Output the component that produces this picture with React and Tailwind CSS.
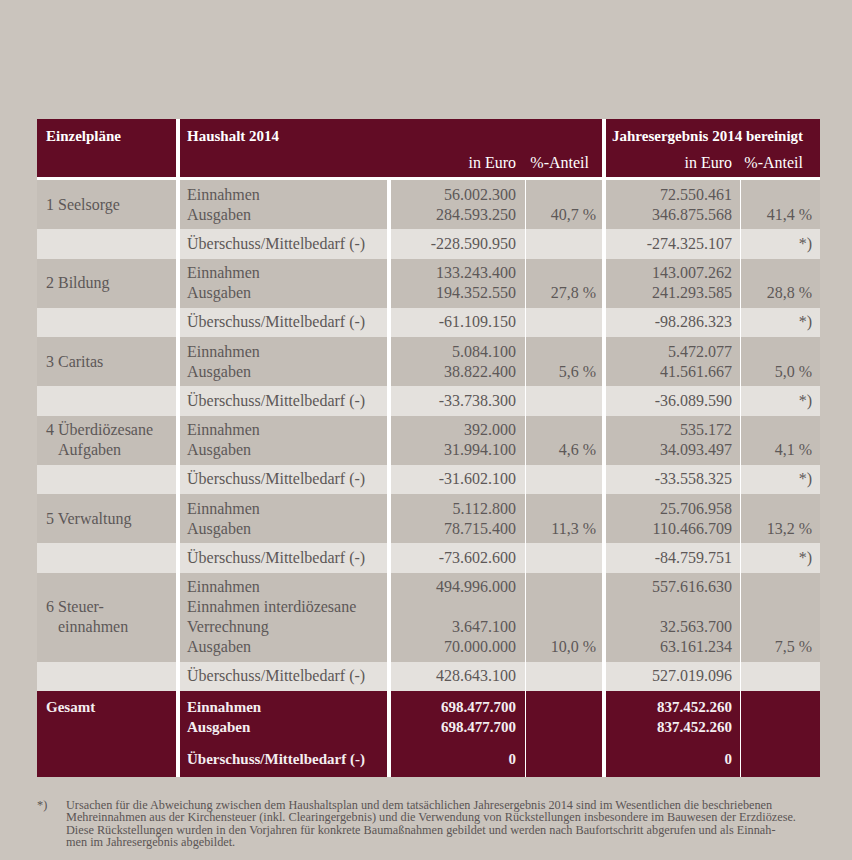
import React from 'react';

const rows = [
  {
    name: ['1 Seelsorge'],
    labels: ['Einnahmen', 'Ausgaben'],
    values: ['56.002.300', '284.593.250'],
    pct: '40,7 %',
    values2: ['72.550.461', '346.875.568'],
    pct2: '41,4 %',
    diff: '-228.590.950',
    diff2: '-274.325.107',
    star: true,
  },
  {
    name: ['2 Bildung'],
    labels: ['Einnahmen', 'Ausgaben'],
    values: ['133.243.400', '194.352.550'],
    pct: '27,8 %',
    values2: ['143.007.262', '241.293.585'],
    pct2: '28,8 %',
    diff: '-61.109.150',
    diff2: '-98.286.323',
    star: true,
  },
  {
    name: ['3 Caritas'],
    labels: ['Einnahmen', 'Ausgaben'],
    values: ['5.084.100', '38.822.400'],
    pct: '5,6 %',
    values2: ['5.472.077', '41.561.667'],
    pct2: '5,0 %',
    diff: '-33.738.300',
    diff2: '-36.089.590',
    star: true,
  },
  {
    name: ['4 Überdiözesane', 'Aufgaben'],
    labels: ['Einnahmen', 'Ausgaben'],
    values: ['392.000', '31.994.100'],
    pct: '4,6 %',
    values2: ['535.172', '34.093.497'],
    pct2: '4,1 %',
    diff: '-31.602.100',
    diff2: '-33.558.325',
    star: true,
  },
  {
    name: ['5 Verwaltung'],
    labels: ['Einnahmen', 'Ausgaben'],
    values: ['5.112.800', '78.715.400'],
    pct: '11,3 %',
    values2: ['25.706.958', '110.466.709'],
    pct2: '13,2 %',
    diff: '-73.602.600',
    diff2: '-84.759.751',
    star: true,
  },
  {
    name: ['6 Steuer-', 'einnahmen'],
    labels: ['Einnahmen', 'Einnahmen interdiözesane', 'Verrechnung', 'Ausgaben'],
    values: ['494.996.000', '', '3.647.100', '70.000.000'],
    pct: '10,0 %',
    values2: ['557.616.630', '', '32.563.700', '63.161.234'],
    pct2: '7,5 %',
    diff: '428.643.100',
    diff2: '527.019.096',
    star: false,
  },
];

const Lines = ({ items }) => (
  <>
    {items.map((t, i) => (
      <div key={i} className="h-5 whitespace-nowrap">
        {t}
      </div>
    ))}
  </>
);

const DataRow = ({ r }) => (
  <div className="flex bg-white">
    <div className="w-[139px] bg-[#c4beb7] pl-[9px] flex flex-col justify-center">
      {r.name.map((t, i) => (
        <div key={i} className={i > 0 ? 'h-5 pl-3' : 'h-5'}>
          {t}
        </div>
      ))}
    </div>
    <div className="w-[207px] ml-1 bg-[#c4beb7] pl-[7px] py-[4.5px]">
      <Lines items={r.labels} />
    </div>
    <div className="w-[134px] ml-1 bg-[#c4beb7] pr-[9px] py-[4.5px] text-right">
      <Lines items={r.values} />
    </div>
    <div className="w-[76px] ml-px bg-[#c4beb7] pr-[6px] py-[4.5px] text-right flex flex-col justify-end">
      <div className="h-5">{r.pct}</div>
    </div>
    <div className="w-[134px] ml-1 bg-[#c4beb7] pr-[8px] py-[4.5px] text-right">
      <Lines items={r.values2} />
    </div>
    <div className="w-[79px] ml-px bg-[#c4beb7] pr-[8px] py-[4.5px] text-right flex flex-col justify-end">
      <div className="h-5">{r.pct2}</div>
    </div>
  </div>
);

const DiffRow = ({ r }) => (
  <div className="flex bg-white">
    <div className="w-[139px] bg-[#e4e1dd]" />
    <div className="w-[207px] ml-1 bg-[#e4e1dd] pl-[7px] py-[4.75px]">
      <div className="h-5">Überschuss/Mittelbedarf (-)</div>
    </div>
    <div className="w-[134px] ml-1 bg-[#e4e1dd] pr-[9px] py-[4.75px] text-right">
      <div className="h-5">{r.diff}</div>
    </div>
    <div className="w-[76px] ml-px bg-[#e4e1dd]" />
    <div className="w-[134px] ml-1 bg-[#e4e1dd] pr-[8px] py-[4.75px] text-right">
      <div className="h-5">{r.diff2}</div>
    </div>
    <div className="w-[79px] ml-px bg-[#e4e1dd] pr-[8px] py-[4.75px] text-right">
      <div className="h-5">{r.star ? '*)' : ''}</div>
    </div>
  </div>
);

export default function App() {
  return (
    <div
      className="min-h-[860px] bg-[#cac4bd] pt-[119px] pl-[37px] text-[#5d5857] text-[16px] leading-5"
      style={{ fontFamily: '"Liberation Serif", "Times New Roman", serif' }}
    >
      <div className="w-[783px]">
        {/* header */}
        <div className="flex bg-white pb-[3px] text-white font-bold text-[15px]">
          <div className="w-[139px] h-[58px] bg-[#620c25] pl-[9px] pt-[7px]">Einzelpläne</div>
          <div className="w-[422px] ml-1 bg-[#620c25] pt-[7px] pb-1 flex flex-col justify-between">
            <div className="pl-[7px] h-5">Haushalt 2014</div>
            <div className="flex font-normal text-[16px]">
              <div className="w-[345px] pr-[9px] text-right h-5">in Euro</div>
              <div className="w-[77px] pr-[13px] text-right h-5">%-Anteil</div>
            </div>
          </div>
          <div className="w-[214px] ml-1 bg-[#620c25] pt-[7px] pb-1 flex flex-col justify-between">
            <div className="pl-[6px] h-5 whitespace-nowrap">Jahresergebnis 2014 bereinigt</div>
            <div className="flex font-normal text-[16px]">
              <div className="w-[134px] pr-[8px] text-right h-5">in Euro</div>
              <div className="w-[80px] pr-[17px] text-right h-5">%-Anteil</div>
            </div>
          </div>
        </div>

        {rows.map((r, i) => (
          <React.Fragment key={i}>
            <DataRow r={r} />
            <DiffRow r={r} />
          </React.Fragment>
        ))}

        {/* total */}
        <div className="flex bg-white text-[#f4eef0] font-bold text-[15px]">
          <div className="w-[139px] bg-[#620c25] pl-[9px] pt-[6px] pb-2">Gesamt</div>
          <div className="w-[207px] ml-1 bg-[#620c25] pl-[7px] pt-[6px] pb-2">
            <div className="h-5">Einnahmen</div>
            <div className="h-5">Ausgaben</div>
            <div className="h-5 mt-3">Überschuss/Mittelbedarf (-)</div>
          </div>
          <div className="w-[134px] ml-1 bg-[#620c25] pr-[9px] pt-[6px] pb-2 text-right">
            <div className="h-5">698.477.700</div>
            <div className="h-5">698.477.700</div>
            <div className="h-5 mt-3">0</div>
          </div>
          <div className="w-[76px] ml-px bg-[#620c25]" />
          <div className="w-[134px] ml-1 bg-[#620c25] pr-[8px] pt-[6px] pb-2 text-right">
            <div className="h-5">837.452.260</div>
            <div className="h-5">837.452.260</div>
            <div className="h-5 mt-3">0</div>
          </div>
          <div className="w-[79px] ml-px bg-[#620c25]" />
        </div>
      </div>

      {/* footnote */}
      <div className="flex mt-[22px] text-[12.25px] leading-[12.4px] text-[#5a5454]">
        <div className="w-[29px]">*)</div>
        <div className="whitespace-nowrap">
          <div>Ursachen für die Abweichung zwischen dem Haushaltsplan und dem tatsächlichen Jahresergebnis 2014 sind im Wesentlichen die beschriebenen</div>
          <div>Mehreinnahmen aus der Kirchensteuer (inkl. Clearingergebnis) und die Verwendung von Rückstellungen insbesondere im Bauwesen der Erzdiözese.</div>
          <div>Diese Rückstellungen wurden in den Vorjahren für konkrete Baumaßnahmen gebildet und werden nach Baufortschritt abgerufen und als Einnah-</div>
          <div>men im Jahresergebnis abgebildet.</div>
        </div>
      </div>
    </div>
  );
}
